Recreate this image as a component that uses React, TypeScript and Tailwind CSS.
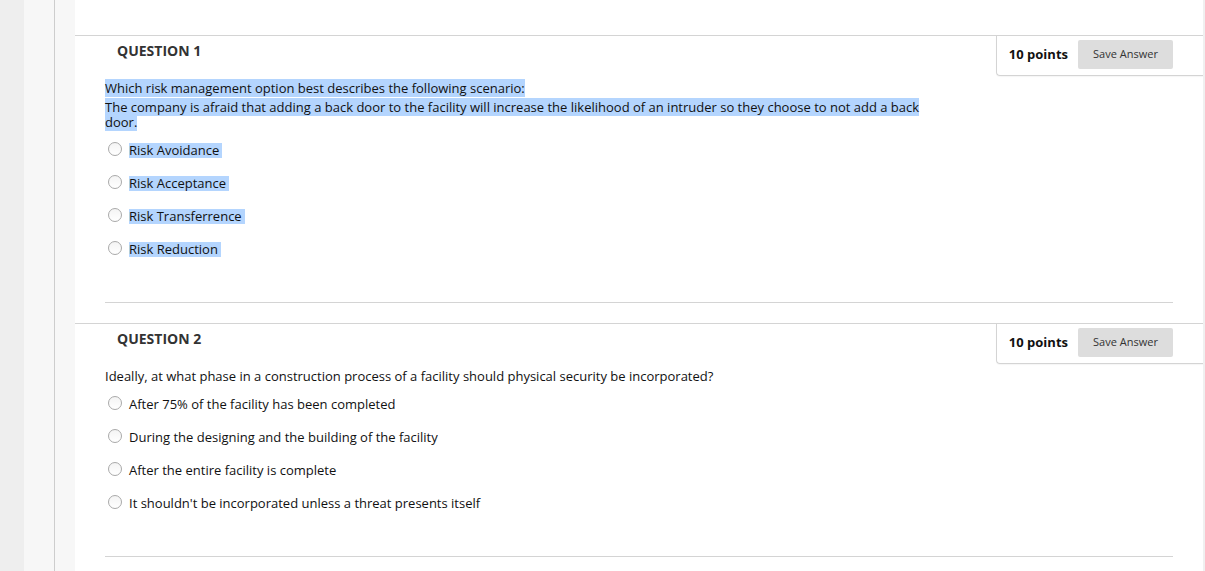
import React from 'react';

type Question = {
  number: number;
  points: number;
  prompt: string[];
  options: string[];
  highlighted: boolean;
};

const questions: Question[] = [
  {
    number: 1,
    points: 10,
    prompt: [
      'Which risk management option best describes the following scenario:',
      'The company is afraid that adding a back door to the facility will increase the likelihood of an intruder so they choose to not add a back door.',
    ],
    options: ['Risk Avoidance', 'Risk Acceptance', 'Risk Transferrence', 'Risk Reduction'],
    highlighted: true,
  },
  {
    number: 2,
    points: 10,
    prompt: ['Ideally, at what phase in a construction process of a facility should physical security be incorporated?'],
    options: [
      'After 75% of the facility has been completed',
      'During the designing and the building of the facility',
      'After the entire facility is complete',
      "It shouldn't be incorporated unless a threat presents itself",
    ],
    highlighted: false,
  },
];

const Radio: React.FC = () => (
  <span className="block w-[14px] h-[14px] rounded-full border border-[#a9a9a9] bg-gradient-to-b from-[#f4f4f4] to-white shrink-0" />
);

const QuestionBlock: React.FC<{ q: Question }> = ({ q }) => {
  const hl = q.highlighted ? 'bg-[#b4d5fe]' : '';
  return (
    <section className="border-t border-[#d4d4d4]">
      <div className="flex items-start h-[40px]">
        <h3 className="pl-[42px] pt-[5px] text-[14px] leading-[20px] font-bold text-[#333]">
          QUESTION {q.number}
        </h3>
        <div className="ml-auto h-[40px] flex items-start pt-[4px] pl-[12px] pr-[30px] border-l border-b border-[#d4d4d4] rounded-bl-[4px] shadow-[0_1px_1px_rgba(0,0,0,0.04)]">
          <span className="h-[29px] flex items-center text-[13px] font-bold text-[#111]">
            {q.points} points
          </span>
          <button className="ml-[10px] w-[95px] h-[29px] bg-[#dddddd] text-[11px] text-[#333] rounded-[2px]">
            Save Answer
          </button>
        </div>
      </div>

      <div className="px-[30px] pt-[5px]">
        <div className="w-[825px] text-[13px] leading-[15px] text-[#111]">
          {q.prompt.map((p, i) => (
            <p key={i} className={i < q.prompt.length - 1 ? 'mb-[4px]' : ''}>
              <span className={hl}>{p}</span>
            </p>
          ))}
        </div>

        <ul className="mt-[4px]">
          {q.options.map((opt) => (
            <li key={opt} className="h-[33px] flex items-center pl-[3px] gap-[7px] text-[13px] leading-[15px] text-[#111]">
              <span className="-mt-[3px]">
                <Radio />
              </span>
              <span className={`${hl} pr-[3px]`}>{opt}</span>
            </li>
          ))}
        </ul>

        <div className="mt-[36px] border-t border-[#d4d4d4]" />
      </div>
    </section>
  );
};

export default function App() {
  return (
    <div
      className="flex h-[571px] w-full overflow-hidden bg-white"
      style={{ fontFamily: '"Open Sans", "Noto Sans", sans-serif' }}
    >
      <div className="w-[24px] bg-[#eeeeee]" />
      <div className="w-[31px] bg-[#f7f7f7] border-r border-[#cdcdcd]" />
      <div className="w-[20px] bg-[#f7f7f7]" />
      <main className="flex-1 pt-[35px] flex flex-col gap-[20px]">
        {questions.map((q) => (
          <QuestionBlock key={q.number} q={q} />
        ))}
      </main>
      <div className="w-[2px] bg-[#f0f0f0]" />
    </div>
  );
}
